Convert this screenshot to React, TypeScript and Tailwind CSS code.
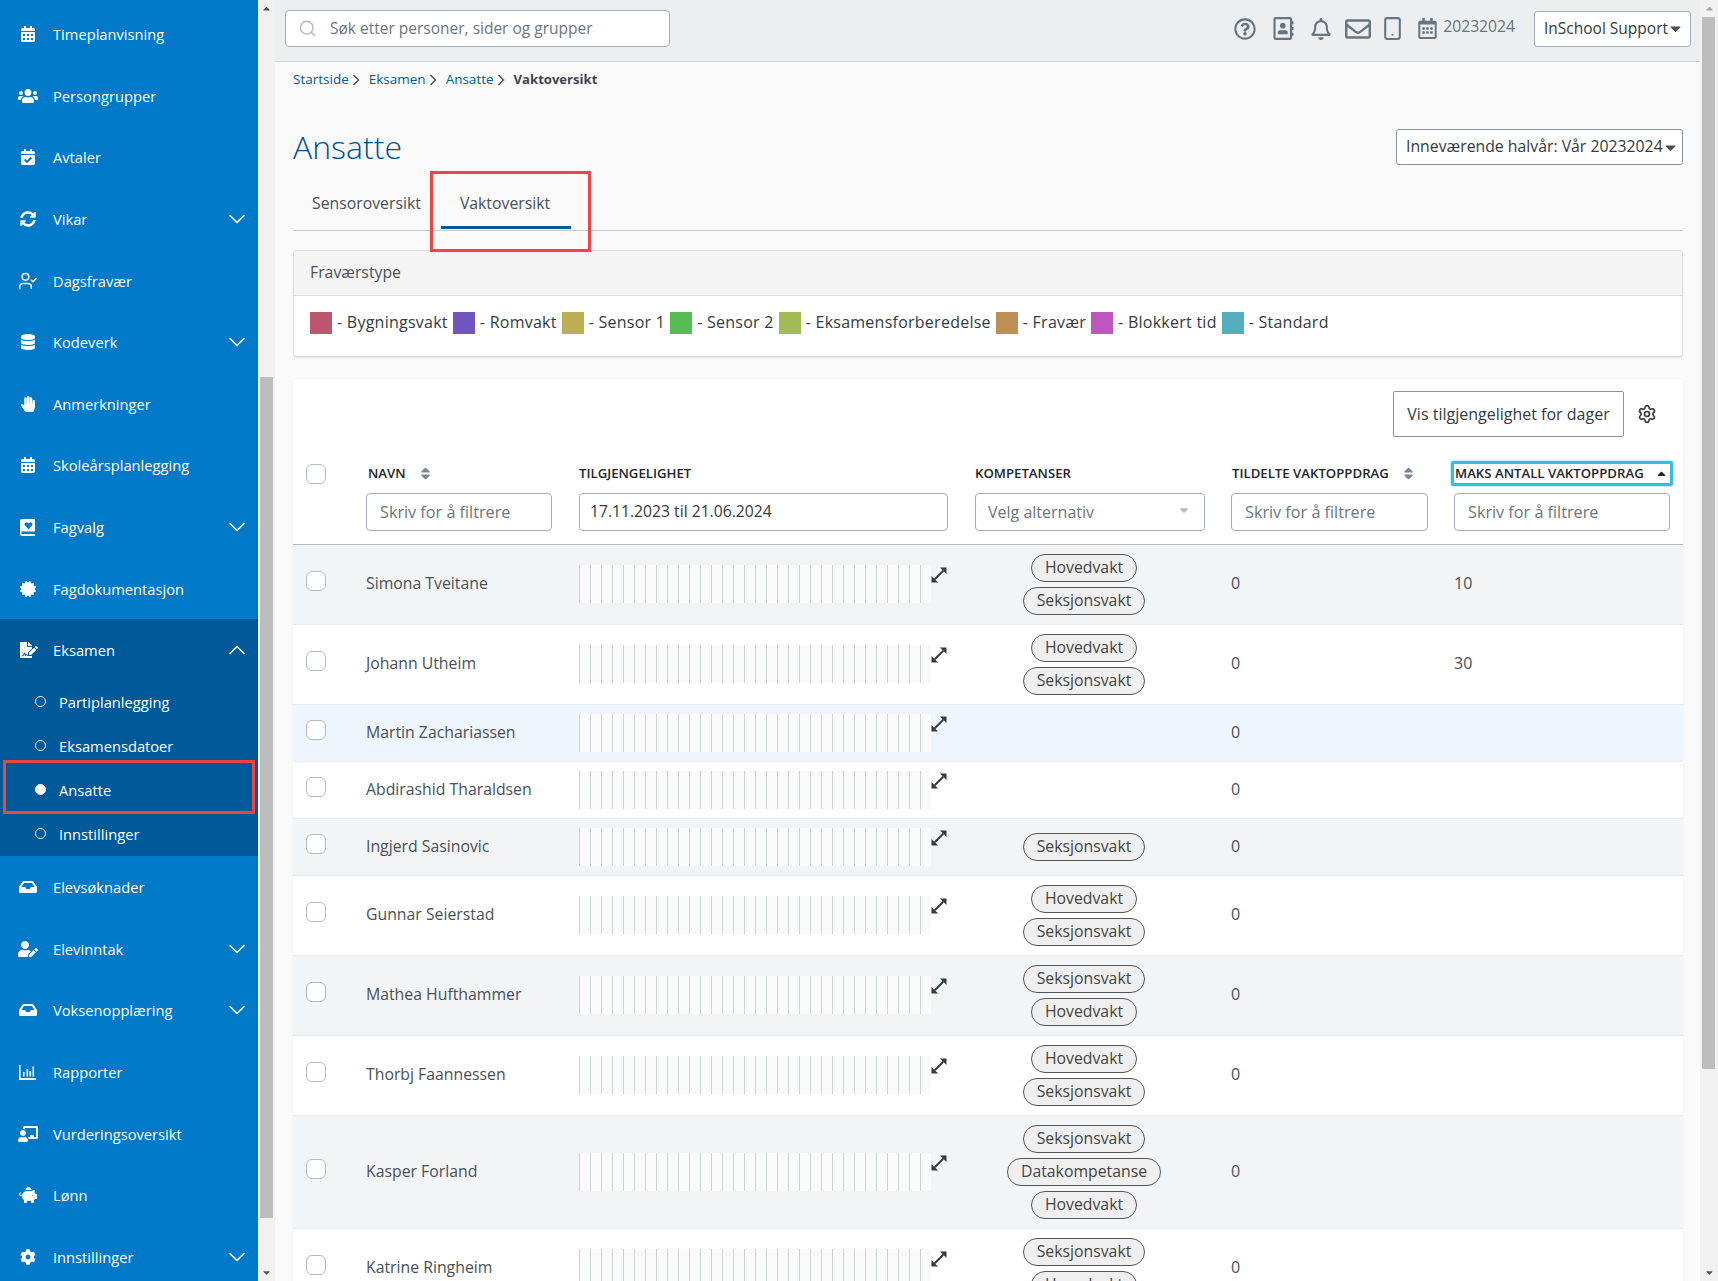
import {
  FaCalendarAlt, FaUsers, FaCalendarCheck, FaSyncAlt, FaDatabase, FaHandPaper, FaCertificate,
  FaFileSignature, FaInbox, FaUserEdit, FaChalkboardTeacher, FaPiggyBank, FaCog,
  FaRegQuestionCircle, FaRegAddressBook, FaRegBell, FaRegEnvelope, FaRegCalendarAlt,
  FaSort, FaCaretDown, FaCaretUp,
} from 'react-icons/fa';
import { ChevronDown, ChevronUp, Search, Settings, UserCheck, Smartphone } from 'lucide-react';

const font = { fontFamily: '"Open Sans", sans-serif' };

type NavItem = { label: string; icon: React.ReactNode; chevron?: boolean };

function BookHeartIcon() {
  return (
    <svg width="15" height="17" viewBox="0 0 15 17" fill="currentColor">
      <path d="M2 0h13v12.5H2.5a1.25 1.25 0 0 0 0 2.5H15v2H2.2A2.2 2.2 0 0 1 0 14.8V2a2 2 0 0 1 2-2z" />
      <path d="M8.5 10.2L5 6.6a2 2 0 0 1 0-2.7 2 2 0 0 1 2.8 0l.7.7.7-.7a2 2 0 0 1 2.8 0 2 2 0 0 1 0 2.7z" fill="#0079c9" />
    </svg>
  );
}

function ReportIcon() {
  return (
    <svg width="17" height="15" viewBox="0 0 17 15" fill="currentColor">
      <rect x="0" y="0" width="1.6" height="15" />
      <rect x="0" y="13" width="17" height="2" />
      <rect x="4" y="7" width="1.6" height="4.5" />
      <rect x="7.5" y="4" width="1.6" height="7.5" />
      <rect x="10.5" y="6" width="1.6" height="5.5" />
      <rect x="13.5" y="1.5" width="1.6" height="10" />
    </svg>
  );
}

function ExpandIcon() {
  return (
    <svg width="16" height="16" viewBox="0 0 17 17" className="mt-[2px] text-[#343a40]" fill="currentColor">
      <path d="M4 13L13 4" stroke="currentColor" strokeWidth="2.1" />
      <path d="M9.5 0.5h7V7.5z" />
      <path d="M0.5 9.5v7H7.5z" />
    </svg>
  );
}

const navTop: NavItem[] = [
  { label: 'Timeplanvisning', icon: <FaCalendarAlt size={16} /> },
  { label: 'Persongrupper', icon: <FaUsers size={20} /> },
  { label: 'Avtaler', icon: <FaCalendarCheck size={16} /> },
  { label: 'Vikar', icon: <FaSyncAlt size={16} />, chevron: true },
  { label: 'Dagsfravær', icon: <UserCheck size={20} strokeWidth={1.8} /> },
  { label: 'Kodeverk', icon: <FaDatabase size={16} />, chevron: true },
  { label: 'Anmerkninger', icon: <FaHandPaper size={16} /> },
  { label: 'Skoleårsplanlegging', icon: <FaCalendarAlt size={16} /> },
  { label: 'Fagvalg', icon: <BookHeartIcon />, chevron: true },
  { label: 'Fagdokumentasjon', icon: <FaCertificate size={16} /> },
];

const navBottom: NavItem[] = [
  { label: 'Elevsøknader', icon: <FaInbox size={18} /> },
  { label: 'Elevinntak', icon: <FaUserEdit size={20} />, chevron: true },
  { label: 'Voksenopplæring', icon: <FaInbox size={18} />, chevron: true },
  { label: 'Rapporter', icon: <ReportIcon /> },
  { label: 'Vurderingsoversikt', icon: <FaChalkboardTeacher size={20} /> },
  { label: 'Lønn', icon: <FaPiggyBank size={18} /> },
  { label: 'Innstillinger', icon: <FaCog size={16} />, chevron: true },
];

const subItems = ['Partiplanlegging', 'Eksamensdatoer', 'Ansatte', 'Innstillinger'];

const legend = [
  ['Bygningsvakt', 'bg-[#bd566f]'],
  ['Romvakt', 'bg-[#7056bd]'],
  ['Sensor 1', 'bg-[#bdaf56]'],
  ['Sensor 2', 'bg-[#56bd56]'],
  ['Eksamensforberedelse', 'bg-[#a3bd56]'],
  ['Fravær', 'bg-[#bd8f56]'],
  ['Blokkert tid', 'bg-[#bd56bd]'],
  ['Standard', 'bg-[#56adbd]'],
];

const rows = [
  { name: 'Simona Tveitane', pills: ['Hovedvakt', 'Seksjonsvakt'], max: '10', bg: 'bg-[#f3f4f6]' },
  { name: 'Johann Utheim', pills: ['Hovedvakt', 'Seksjonsvakt'], max: '30', bg: 'bg-white' },
  { name: 'Martin Zachariassen', pills: [], max: '', bg: 'bg-[#eef5fc]' },
  { name: 'Abdirashid Tharaldsen', pills: [], max: '', bg: 'bg-white' },
  { name: 'Ingjerd Sasinovic', pills: ['Seksjonsvakt'], max: '', bg: 'bg-[#f3f4f6]' },
  { name: 'Gunnar Seierstad', pills: ['Hovedvakt', 'Seksjonsvakt'], max: '', bg: 'bg-white' },
  { name: 'Mathea Hufthammer', pills: ['Seksjonsvakt', 'Hovedvakt'], max: '', bg: 'bg-[#f3f4f6]' },
  { name: 'Thorbj Faannessen', pills: ['Hovedvakt', 'Seksjonsvakt'], max: '', bg: 'bg-white' },
  { name: 'Kasper Forland', pills: ['Seksjonsvakt', 'Datakompetanse', 'Hovedvakt'], max: '', bg: 'bg-[#f3f4f6]' },
  { name: 'Katrine Ringheim', pills: ['Seksjonsvakt', 'Hovedvakt'], max: '', bg: 'bg-white' },
];

const cols = 'grid grid-cols-[73px_213px_396px_256px_223px_1fr]';

function NavRow({ item }: { item: NavItem }) {
  return (
    <div className="flex h-[61.6px] shrink-0 items-center text-white">
      <span className="flex w-[53px] shrink-0 items-center justify-center pl-[2px]">{item.icon}</span>
      <span className="flex-1 text-[14.7px] font-medium">{item.label}</span>
      {item.chevron && <ChevronDown size={28} strokeWidth={1.4} className="mr-[7px]" />}
    </div>
  );
}

function Sidebar() {
  return (
    <div className="relative flex h-full w-[275px] shrink-0 overflow-hidden">
      <div className="flex w-[258px] shrink-0 flex-col bg-[#0079c9] pt-[3.5px]">
        {navTop.map((n) => <NavRow key={n.label} item={n} />)}
        <div className="flex h-[237px] shrink-0 flex-col bg-[#005a9a] text-white">
          <div className="flex h-[60.5px] shrink-0 items-center">
            <span className="flex w-[53px] shrink-0 items-center justify-center pl-[4px]"><FaFileSignature size={18} /></span>
            <span className="flex-1 text-[14.7px] font-medium">Eksamen</span>
            <ChevronUp size={28} strokeWidth={1.4} className="mr-[7px]" />
          </div>
          <div className="flex flex-col">
            {subItems.map((s) => (
              <div key={s} className="flex h-[44px] items-center">
                <span className={`ml-[35px] mr-[13px] h-[11px] w-[11px] rounded-full border-[1.5px] border-white ${s === 'Ansatte' ? 'bg-white' : ''}`} />
                <span className="text-[14.7px] font-medium">{s}</span>
              </div>
            ))}
          </div>
        </div>
        {navBottom.map((n) => <NavRow key={n.label} item={n} />)}
      </div>
      <div className="relative flex w-[17px] shrink-0 flex-col items-center bg-[#f1f1f1]">
        <FaCaretUp size={11} className="mt-[3px] text-[#505050]" />
        <div className="absolute left-[2px] top-[377px] h-[841px] w-[13px] bg-[#bdbdbd]" />
        <FaCaretDown size={11} className="absolute bottom-[3px] text-[#505050]" />
      </div>
      {/* red marker around the active sub item */}
      <div className="absolute left-[3px] top-[760px] h-[54px] w-[252px] border-[3px] border-[#ef4444]" />
    </div>
  );
}

function Header() {
  return (
    <div className="flex h-[62px] shrink-0 items-center border-b border-[#ced4da] bg-[#eceef0] pb-[4px] pl-[10px] pr-[9px]">
      <div className="flex h-[37px] w-[385px] items-center rounded border border-[#a6adb5] bg-white pl-[12px]">
        <Search size={19} className="text-[#b9bdc1]" />
        <span className="ml-[13px] text-[15.5px] text-[#6c757d]">Søk etter personer, sider og grupper</span>
      </div>
      <div className="ml-auto flex items-center text-[#66757f]">
        <FaRegQuestionCircle size={22} />
        <FaRegAddressBook size={23} className="ml-[16px]" />
        <FaRegBell size={22} className="ml-[15px]" />
        <FaRegEnvelope size={26} className="ml-[13px]" />
        <Smartphone size={25} strokeWidth={2} className="ml-[9px]" />
        <FaRegCalendarAlt size={21} className="ml-[12px]" />
        <span className="ml-[5px] -translate-y-[2px] text-[15.7px] font-medium">20232024</span>
      </div>
      <div className="ml-[19px] flex h-[36px] w-[157px] items-center rounded-[3px] border border-[#a6adb5] bg-white pl-[9px] text-[15.5px] font-medium text-[#343a40]">
        InSchool Support
        <FaCaretDown size={17} className="-ml-[1px] text-[#495057]" />
      </div>
    </div>
  );
}

function Breadcrumb() {
  const links = ['Startside', 'Eksamen', 'Ansatte'];
  return (
    <div className="flex h-[35px] items-center text-[13.5px] font-medium">
      {links.map((l) => (
        <span key={l} className="mr-[8px] flex items-center text-[#005a9a]">
          {l}
          <svg width="9" height="12" viewBox="0 0 9 12" className="ml-[3px] text-[#444]" fill="none" stroke="currentColor" strokeWidth="1.3"><path d="M1.5 1l5 5-5 5" /></svg>
        </span>
      ))}
      <span className="text-[13.1px] font-bold text-[#3d4650]">Vaktoversikt</span>
    </div>
  );
}

function Tabs() {
  return (
    <div className="relative flex h-[66px] items-start border-b border-[#c7cbcf] text-[15.8px] text-[#495057]">
      <div className="ml-[19px] mt-[27px]">Sensoroversikt</div>
      <div className="ml-[39px] mt-[27px]">Vaktoversikt</div>
      <div className="absolute bottom-[1px] left-[148px] h-[3px] w-[130px] bg-[#005a9a]" />
      <div className="absolute -bottom-[22px] left-[137px] h-[81px] w-[161px] border-[3px] border-[#ef4444]" />
    </div>
  );
}

function Legend() {
  return (
    <div className="mt-[19px] h-[107px] overflow-hidden rounded border border-[#dddddd] bg-white shadow-[0_1px_1px_rgba(0,0,0,0.08)]">
      <div className="flex h-[45px] items-center border-b border-[#dddddd] bg-[#f4f4f4] pl-[16px] text-[15.8px] text-[#495057]">Fraværstype</div>
      <div className="flex items-center pl-[16px] pt-[15px] text-[16px] font-medium tracking-[0.25px] text-[#343a40]">
        {legend.map(([label, c]) => (
          <div key={label} className="mr-[5px] flex items-center">
            <span className={`mr-[5px] h-[22px] w-[22px] ${c}`} />
            <span className="-translate-y-[1px]">- {label}</span>
          </div>
        ))}
      </div>
    </div>
  );
}

function Checkbox() {
  return <span className="ml-[13px] block h-[20px] w-[20px] rounded-[6px] border-[1.5px] border-[#b4bac0] bg-white" />;
}

function FilterInput({ w, text }: { w: string; text: string }) {
  return (
    <div className={`flex h-[38px] items-center rounded border border-[#a6adb5] bg-white pl-[13px] text-[16.2px] text-[#6c757d] ${w}`}>
      {text}
    </div>
  );
}

function Th({ children }: { children: React.ReactNode }) {
  return <div className="flex h-[25px] items-center text-[13.2px] font-semibold uppercase text-[#212529]">{children}</div>;
}

function SortIcon() {
  return <FaSort size={15} className="ml-[12px] text-[#7b868f]" />;
}

function AvailabilityBar() {
  return (
    <div className="flex items-start">
      <div className="flex h-[38px] w-[352px] bg-[#fafafa]">
        {Array.from({ length: 32 }).map((_, i) => (
          <span key={i} className="h-full w-[11px] shrink-0 border-l border-[#cdd3d3]" />
        ))}
      </div>
      <ExpandIcon />
    </div>
  );
}

function Row({ r }: { r: (typeof rows)[number] }) {
  return (
    <div className={`${cols} min-h-[57px] items-center border-b border-[#e9ecef] ${r.bg}`}>
      <div className="-translate-y-[3px]"><Checkbox /></div>
      <div className="text-[15.8px] text-[#495057]">{r.name}</div>
      <div><AvailabilityBar /></div>
      <div className="flex w-[218px] flex-col items-center gap-[5px] py-[9px]">
        {r.pills.map((p) => (
          <span key={p} className="flex h-[28px] items-center rounded-full border border-[#555] bg-[#efefef] px-[13px] text-[15.8px] text-[#444]">{p}</span>
        ))}
      </div>
      <div className="-translate-y-[1px] text-[16px] text-[#495057]">0</div>
      <div className="-translate-y-[1px] text-[16px] text-[#495057]">{r.max}</div>
    </div>
  );
}

function EmployeeTable() {
  return (
    <div className="mt-[22px] rounded-t bg-white shadow-[0_0_2px_rgba(0,0,0,0.08)]">
      <div className="flex h-[82px] items-start justify-end pr-[26px] pt-[12px]">
        <div className="flex h-[46px] w-[231px] items-center justify-center rounded-[2px] border border-[#8a939b] text-[16px] font-medium text-[#343a40]">Vis tilgjengelighet for dager</div>
        <Settings size={20} className="ml-[13px] mt-[13px] text-[#343a40]" />
      </div>
      <div className={`${cols} h-[83.5px] border-b border-[#b4bac0]`}>
        <div className="pt-[3px]"><Checkbox /></div>
        <div className="flex flex-col gap-[7px]">
          <Th><span className="ml-[2px]">Navn</span><SortIcon /></Th>
          <FilterInput w="w-[186px]" text="Skriv for å filtrere" />
        </div>
        <div className="flex flex-col gap-[7px]">
          <Th>Tilgjengelighet</Th>
          <div className="flex h-[38px] w-[369px] items-center rounded border border-[#a6adb5] bg-white pl-[10px] text-[15.7px] font-medium text-[#343a40]">17.11.2023 til 21.06.2024</div>
        </div>
        <div className="flex flex-col gap-[7px]">
          <Th>Kompetanser</Th>
          <div className="flex h-[38px] w-[230px] items-center justify-between rounded border border-[#a6adb5] bg-white pl-[12px] pr-[13px] text-[16px] text-[#6c757d]">
            Velg alternativ
            <FaCaretDown size={14} className="-translate-y-[2px] text-[#b4bac0]" />
          </div>
        </div>
        <div className="flex flex-col gap-[7px]">
          <Th><span className="ml-[1px]">Tildelte vaktoppdrag</span><SortIcon /></Th>
          <FilterInput w="w-[197px]" text="Skriv for å filtrere" />
        </div>
        <div className="flex flex-col gap-[7px]">
          <div className="-ml-[3px] flex h-[25px] w-[222px] items-center rounded-[2px] border-[3px] border-[#35bde0] pl-[1px] text-[13.2px] font-semibold uppercase text-[#212529] shadow-[0_0_2px_#35bde0]">
            Maks antall vaktoppdrag
            <FaCaretUp size={13} className="ml-auto mr-[2px]" />
          </div>
          <FilterInput w="w-[216px]" text="Skriv for å filtrere" />
        </div>
      </div>
      {rows.map((r) => <Row key={r.name} r={r} />)}
    </div>
  );
}

export default function App() {
  return (
    <div className="flex h-[1281px] w-full overflow-hidden bg-[#fafafa]" style={font}>
      <Sidebar />
      <div className="flex h-full min-w-0 flex-1 flex-col overflow-hidden">
        <Header />
        <div className="flex-1 overflow-hidden pl-[18px] pr-[17px]">
          <Breadcrumb />
          <div className="flex h-[68px] items-center justify-between pt-[32px]">
            <h1 className="-translate-y-[1px] text-[32px] font-light leading-[45px] text-[#00508c]">Ansatte</h1>
            <div className="flex h-[36px] w-[287px] items-center rounded-[3px] border border-[#8a939b] bg-white pl-[9px] text-[15.8px] font-medium text-[#343a40]">
              Inneværende halvår: Vår 20232024
              <FaCaretDown size={17} className="-ml-[1px] text-[#495057]" />
            </div>
          </div>
          <Tabs />
          <Legend />
          <EmployeeTable />
        </div>
      </div>
      <div className="relative flex h-full w-[18px] shrink-0 flex-col items-center bg-[#f1f1f1]">
        <FaCaretUp size={11} className="mt-[3px] text-[#a3a3a3]" />
        <div className="absolute left-[2px] top-[17px] h-[1052px] w-[13px] bg-[#bdbdbd]" />
        <FaCaretDown size={11} className="absolute bottom-[3px] text-[#505050]" />
      </div>
    </div>
  );
}
